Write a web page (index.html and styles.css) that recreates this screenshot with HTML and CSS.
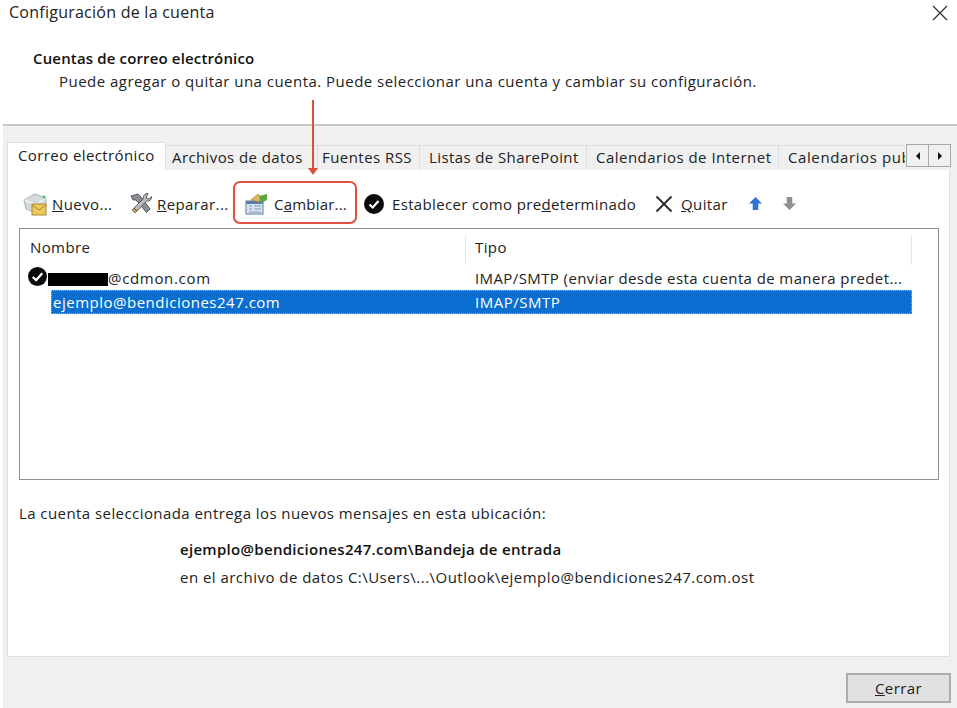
FILE: index.html
```html
<!DOCTYPE html>
<html lang="es">
<head>
<meta charset="utf-8">
<title>Configuración de la cuenta</title>
<link rel="stylesheet" href="styles.css">
</head>
<body>
<div class="window">
  <header class="titlebar">
    <span class="title">Configuración de la cuenta</span>
    <svg class="close" width="16" height="16" viewBox="0 0 16 16"><path d="M1 1 15 15M15 1 1 15" stroke="#333" stroke-width="1.3" fill="none"/></svg>
  </header>
  <section class="intro">
    <h1 class="intro-title">Cuentas de correo electrónico</h1>
    <p class="intro-text">Puede agregar o quitar una cuenta. Puede seleccionar una cuenta y cambiar su configuración.</p>
  </section>
  <main class="panel">
    <div class="tabbar">
      <div class="tabs">
        <div class="tab tab-active">Correo electrónico</div>
        <div class="tab tab-1">Archivos de datos</div>
        <div class="tab tab-2">Fuentes RSS</div>
        <div class="tab tab-3">Listas de SharePoint</div>
        <div class="tab tab-4">Calendarios de Internet</div>
        <div class="tab tab-5">Calendarios publicados</div>
      </div>
      <div class="scroller">
        <div class="scroll-btn"><svg width="6" height="8" viewBox="0 0 6 8"><path d="M5 0V8L1 4Z" fill="#111"/></svg></div>
        <div class="scroll-btn"><svg width="6" height="8" viewBox="0 0 6 8"><path d="M1 0V8L5 4Z" fill="#111"/></svg></div>
      </div>
    </div>
    <div class="content">
      <div class="toolbar">
        <div class="tool tool-new">
          <svg width="26" height="26" viewBox="0 0 26 26"><path d="M1 9 12 3l11 4v9l-10 6L3 18Z" fill="#d5dadd" stroke="#a9b0b5"/><path d="M2 9l11 5 10-7" fill="none" stroke="#f3f5f6" stroke-width="1.500"/><circle cx="21" cy="6" r="1.500" fill="#3fc25a"/><rect x="9" y="13" width="14" height="11" fill="#ecc95c" stroke="#a98a30"/><path d="M9 14l7 5 7-5" fill="none" stroke="#a98a30"/></svg>
          <span><u>N</u>uevo...</span>
        </div>
        <div class="tool tool-repair">
          <svg width="24" height="24" viewBox="0 0 24 24"><path d="M2 4 9 2l3 3 9 12-3.500 3.500L7 8 4 8Z" fill="#8a8f93" stroke="#3a3d40" stroke-width=".8"/><path d="M19 1.500a4 4 0 0 0-4.500 5L5 16l3 3 9.500-10a4 4 0 0 0 5-4.500L20 7l-3-1Z" fill="#b8bcc0" stroke="#3a3d40" stroke-width=".8"/><path d="M5 16l3 3-2 2-3-3Z" fill="#c9a24a" stroke="#4a3f25" stroke-width=".6"/></svg>
          <span><u>R</u>eparar...</span>
        </div>
        <div class="tool tool-change">
          <svg width="24" height="24" viewBox="0 0 24 24"><rect x="2" y="9" width="17" height="13" fill="#dce6f2" stroke="#5b7ca6"/><rect x="2" y="9" width="17" height="3" fill="#5b7ca6"/><path d="M5 14h3M5 17h3M10 14h7M10 17h7M5 20h12" stroke="#7a96b8"/><path d="M7 8 14 2l4 4-3 4Z" fill="#d8b65c" stroke="#8c7430" stroke-width=".6"/><path d="M15 4 23 2v6l-6 3Z" fill="#5aa83c"/></svg>
          <span>C<u>a</u>mbiar...</span>
        </div>
        <div class="tool tool-default">
          <svg class="check" width="20" height="20" viewBox="0 0 20 20"><circle cx="10" cy="10" r="10" fill="#0a0a0a"/><path d="M5.500 10.500 8.700 13.500 14.500 7" fill="none" stroke="#fff" stroke-width="2.200"/></svg>
          <span>Establecer como pre<u>d</u>eterminado</span>
        </div>
        <div class="tool tool-remove">
          <svg width="18" height="18" viewBox="0 0 18 18"><path d="M1.500 1.500 16.500 16.500M16.500 1.500 1.500 16.500" stroke="#333" stroke-width="2" fill="none"/></svg>
          <span><u>Q</u>uitar</span>
        </div>
        <svg class="arrow-up" width="13" height="13" viewBox="0 0 14 14"><path d="M7 0 14 7H10V14H4V7H0Z" fill="#2f74dc"/></svg>
        <svg class="arrow-down" width="13" height="13" viewBox="0 0 14 14"><path d="M7 14 14 7H10V0H4V7H0Z" fill="#8f8f8f"/></svg>
      </div>
      <div class="list">
        <div class="list-head">
          <div class="col-name">Nombre</div>
          <div class="col-type">Tipo</div>
        </div>
        <div class="row">
          <div class="col-name row-first">
            <svg class="row-check" width="19" height="19" viewBox="0 0 18 18"><circle cx="9" cy="9" r="9" fill="#0a0a0a"/><path d="M4.500 9.500 7.700 12.500 13.500 6" fill="none" stroke="#fff" stroke-width="2.200"/></svg>
            <span class="redact"></span><span class="domain">@cdmon.com</span>
          </div>
          <div class="col-type">IMAP/SMTP (enviar desde esta cuenta de manera predet...</div>
        </div>
        <div class="row row-selected">
          <div class="col-name">ejemplo@bendiciones247.com</div>
          <div class="col-type">IMAP/SMTP</div>
        </div>
      </div>
      <p class="delivery">La cuenta seleccionada entrega los nuevos mensajes en esta ubicación:</p>
      <p class="location">ejemplo@bendiciones247.com\Bandeja de entrada</p>
      <p class="datafile">en el archivo de datos C:\Users\...\Outlook\ejemplo@bendiciones247.com.ost</p>
    </div>
    <footer class="footer"><button class="close-btn"><u>C</u>errar</button></footer>
  </main>
  <div class="callout-arrow"></div>
  <div class="callout-box"></div>
</div>
</body>
</html>
```

FILE: styles.css
```css
* { box-sizing: border-box; }
html, body { margin: 0; padding: 0; }
body { font-family: "Open Sans", "Noto Sans", sans-serif; font-size: 15px; letter-spacing: .4px; color: #222; background: #fff; }
p, h1 { margin: 0; }
.window { position: relative; width: 957px; height: 708px; overflow: hidden; display: flex; flex-direction: column; background: #fff; }
.titlebar { height: 48px; padding: 2px 9px 0 9px; display: flex; justify-content: space-between; align-items: flex-start; }
.title { font-size: 16px; line-height: 20px; letter-spacing: .25px; }
.close { margin-top: 3px; }
.intro { height: 76px; padding-left: 33px; }
.intro-title { font-size: 15px; font-weight: 600; line-height: 20px; color: #111; letter-spacing: .15px; }
.intro-text { padding-left: 26px; line-height: 20px; margin-top: 3px; letter-spacing: .47px; }
.panel { flex: 1; margin-left: 3px; background: #f0f0f0; border-top: 2px solid #c8c8c8; display: flex; flex-direction: column; }
.tabbar { height: 44px; padding: 15px 0 0 4px; display: flex; align-items: flex-end; position: relative; }
.tabs { display: flex; width: 898px; height: 29px; overflow: hidden; align-items: flex-end; }
.tab { flex: none; height: 25px; line-height: 23px; border: 1px solid #dedede; border-bottom: 0; border-left: 0; padding: 0 9px; white-space: nowrap; background: #f0f0f0; }
.tab-active { height: 28px; line-height: 25px; width: 159px; background: #fff; padding: 0 10px; border-left: 1px solid #dedede; }
.tab-1 { width: 152px; padding: 0 6px; }
.tab-2 { width: 102px; padding: 0 4px; letter-spacing: .45px; }
.tab-3 { width: 167px; }
.tab-4 { width: 192px; letter-spacing: .48px; }
.tab-5 { letter-spacing: .6px; }
.scroller { position: absolute; left: 903px; top: 18px; width: 45px; height: 23px; display: flex; }
.scroll-btn { flex: 1; border: 1px solid #a8a8a8; background: #f0f0f0; display: flex; align-items: center; justify-content: center; }
.scroll-btn + .scroll-btn { border-left: 0; }
.content { height: 487px; margin: 0 7px 0 4px; background: #fff; border: 1px solid #dedede; border-top: 0; padding: 0 10px 0 11px; }
.toolbar { height: 58px; display: flex; align-items: center; padding-top: 9px; }
.tool { display: flex; align-items: center; white-space: nowrap; }
.tool-new { margin-left: 4px; gap: 3px; width: 106px; }
.tool-repair { gap: 4px; width: 115px; }
.tool-change { gap: 6px; width: 120px; letter-spacing: .2px; }
.tool-default { gap: 8px; width: 291px; letter-spacing: .34px; }
.tool-remove { gap: 8px; width: 94px; }
.arrow-down { margin-left: 21px; }
.list { height: 252px; border: 1px solid #8f8f8f; background: #fff; }
.list-head { display: flex; height: 37px; padding-top: 6px; line-height: 24px; }
.list-head .col-name, .list-head .col-type { border-right: 1px solid #e6e6e6; height: 30px; }
.col-name { width: 446px; padding-left: 10px; flex: none; position: relative; white-space: nowrap; }
.col-type { width: 446px; flex: none; padding-left: 9px; white-space: nowrap; }
.row { display: flex; height: 24px; line-height: 24px; }
.row-first { padding-left: 28px; display: flex; align-items: center; }
.row-check { position: absolute; left: 8px; top: 1px; }
.redact { display: inline-block; width: 60px; height: 13px; background: #000; margin-top: 3px; }
.domain { letter-spacing: .68px; }
.row-selected { margin-left: 31px; width: 861px; background: #0a6fd1; color: #fff; outline: 1px dotted #e0a060; outline-offset: -1px; letter-spacing: .5px; }
.row-selected .col-name { width: 415px; padding-left: 2px; }
.delivery { margin-top: 23px; line-height: 20px; letter-spacing: .43px; }
.location { margin: 16px 0 0 161px; line-height: 20px; font-weight: 600; color: #111; letter-spacing: .3px; }
.datafile { margin: 8px 0 0 161px; line-height: 20px; letter-spacing: .47px; }
.footer { flex: 1; display: flex; justify-content: flex-end; align-items: flex-start; padding: 16px 6px 0 0; }
.close-btn { width: 105px; height: 30px; background: #e1e1e1; border: 2px solid #adadad; font: inherit; letter-spacing: inherit; color: #222; }
.callout-arrow { position: absolute; left: 312px; top: 100px; width: 2px; height: 72px; background: #d9503f; }
.callout-arrow::after { content: ""; position: absolute; left: -4px; bottom: -3px; border: 5px solid transparent; border-top: 7px solid #d9503f; border-bottom: 0; }
.callout-box { position: absolute; left: 233px; top: 181px; width: 124px; height: 43px; border: 2px solid #e0503f; border-radius: 7px; }
```
